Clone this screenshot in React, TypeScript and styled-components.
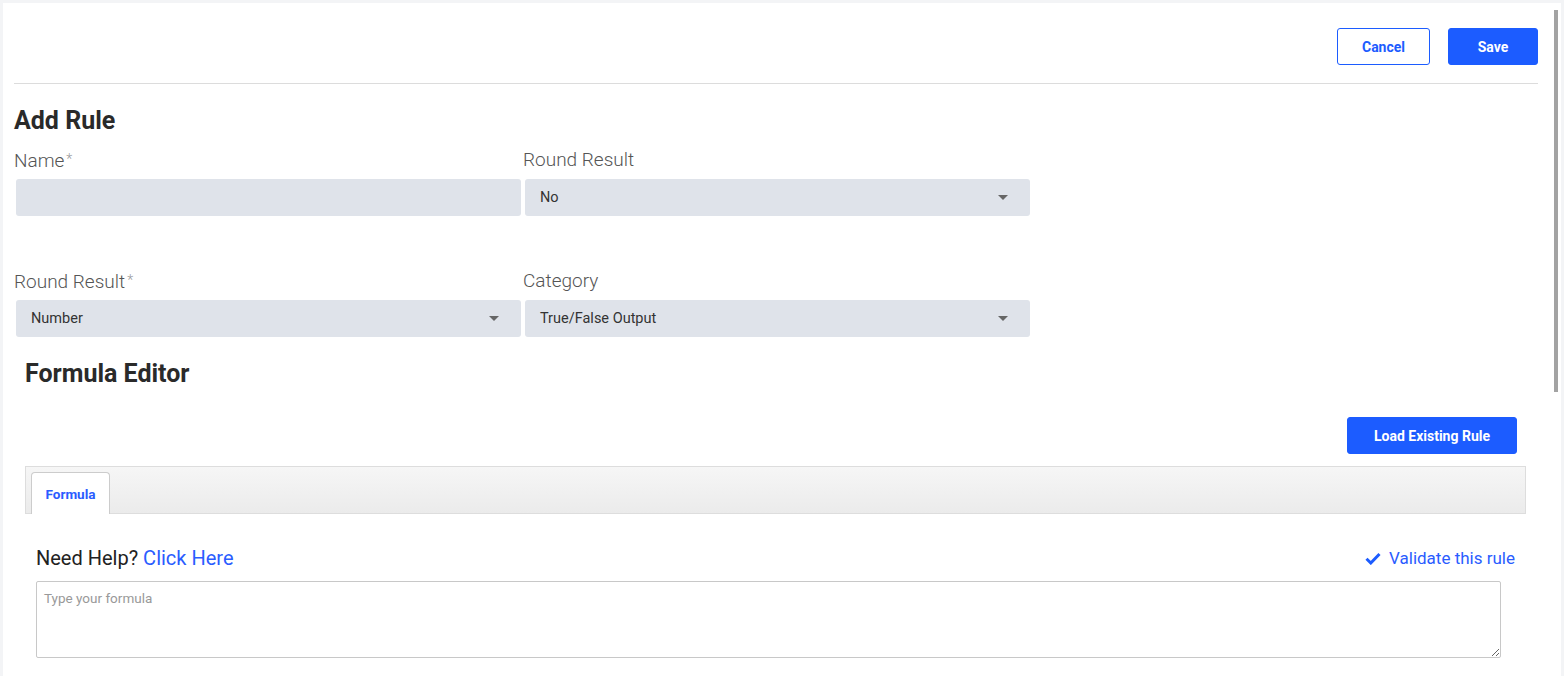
import React from "react";
import styled, { createGlobalStyle } from "styled-components";

const GlobalStyle = createGlobalStyle`
  html, body {
    margin: 0;
    padding: 0;
    background: #f3f4f6;
    font-family: Roboto, "Liberation Sans", Arial, sans-serif;
    overflow: hidden;
  }
  * { box-sizing: border-box; }
`;

const Frame = styled.div`
  padding: 3px 3px 0 3px;
  height: 676px;
`;

const Panel = styled.div`
  background: #ffffff;
  height: 673px;
  display: flex;
  overflow: hidden;
`;

const Content = styled.div`
  flex: 1;
  min-width: 0;
  padding: 0 15px 0 11px;
`;

const ScrollRail = styled.div`
  width: 8px;
  flex: none;
  padding: 7px 3px 0 1px;
`;

const ScrollThumb = styled.div`
  width: 4px;
  height: 382px;
  background: #a3a3a3;
`;

const Header = styled.div`
  display: flex;
  justify-content: flex-end;
  gap: 18px;
  padding: 25px 0 18px;
  border-bottom: 1px solid #dcdcdc;
`;

const Button = styled.button<{ $outline?: boolean; $wide?: boolean }>`
  height: 37px;
  min-width: ${(p) => (p.$wide ? "170px" : p.$outline ? "93px" : "90px")};
  border-radius: 3px;
  font-family: Roboto, "Liberation Sans", Arial, sans-serif;
  font-weight: 700;
  font-size: 14px;
  cursor: pointer;
  border: 1px solid #1c5cff;
  background: ${(p) => (p.$outline ? "#ffffff" : "#1c5cff")};
  color: ${(p) => (p.$outline ? "#1c5cff" : "#ffffff")};
`;

const Title = styled.h2`
  margin: 0;
  font-size: 25px;
  font-weight: 700;
  color: #2a2a2a;
  line-height: 28px;
`;

const FormTitle = styled(Title)`
  padding-top: 23px;
`;

const FieldGrid = styled.div`
  display: grid;
  grid-template-columns: 509px 509px;
  row-gap: 54px;
  margin-top: 14px;
`;

const Field = styled.div`
  display: flex;
  flex-direction: column;
`;

const Label = styled.label`
  font-size: 19px;
  font-weight: 300;
  color: #555;
  line-height: 21px;
  height: 21px;
  margin-bottom: 9px;
`;

const Star = styled.span`
  font-size: 14px;
  color: #999;
  margin-left: 2px;
  vertical-align: 3px;
`;

const Box = styled.div`
  margin: 0 2px;
  height: 37px;
  background: #dfe3ea;
  border-radius: 3px;
  display: flex;
  align-items: center;
  justify-content: space-between;
  padding: 0 22px 0 15px;
  font-size: 14.5px;
  color: #333;
`;

const Caret = styled.span`
  width: 0;
  height: 0;
  border-left: 5px solid transparent;
  border-right: 5px solid transparent;
  border-top: 5px solid #666;
`;

const EditorSection = styled.div`
  padding: 0 12px 0 11px;
`;

const EditorTitle = styled(Title)`
  margin-top: 23px;
`;

const ActionRow = styled.div`
  display: flex;
  justify-content: flex-end;
  padding: 29px 9px 12px 0;
`;

const TabBar = styled.div`
  height: 48px;
  border: 1px solid #dddddd;
  background: linear-gradient(#f6f6f6, #ebebeb);
  display: flex;
  align-items: flex-end;
  padding-left: 5px;
`;

const Tab = styled.div<{ $active?: boolean }>`
  width: 79px;
  height: 42px;
  background: #ffffff;
  border: 1px solid #cccccc;
  border-bottom: none;
  border-radius: 4px 4px 0 0;
  display: flex;
  align-items: center;
  justify-content: center;
  font-size: 13.5px;
  font-weight: 700;
  color: ${(p) => (p.$active ? "#2a5cff" : "#555")};
  margin-bottom: -1px;
`;

const TabBody = styled.div`
  padding: 32px 11px 0 11px;
`;

const HelpRow = styled.div`
  display: flex;
  justify-content: space-between;
  align-items: center;
  height: 24px;
  margin-bottom: 11px;
`;

const HelpText = styled.span`
  font-size: 20px;
  color: #222;
`;

const Link = styled.a`
  color: #2a5cff;
  text-decoration: none;
  cursor: pointer;
`;

const Validate = styled.a`
  display: flex;
  align-items: center;
  gap: 8px;
  font-size: 17px;
  color: #2a5cff;
  cursor: pointer;
`;

const FormulaInput = styled.textarea`
  display: block;
  width: calc(100% - 14px);
  height: 77px;
  border: 1px solid #c8c8c8;
  border-radius: 2px;
  padding: 8px 7px;
  font-family: Roboto, "Liberation Sans", Arial, sans-serif;
  font-size: 13.5px;
  color: #333;
  resize: vertical;
  outline: none;
  &::placeholder {
    color: #999;
  }
`;

const Check = () => (
  <svg width="16" height="13" viewBox="0 0 16 13">
    <path d="M1.5 6.8 L5.8 11 L14.5 2" fill="none" stroke="#1c5cff" strokeWidth="3" />
  </svg>
);

export default function App() {
  return (
    <>
      <GlobalStyle />
      <Frame>
        <Panel>
          <Content>
            <Header>
              <Button $outline>Cancel</Button>
              <Button>Save</Button>
            </Header>
            <FormTitle>Add Rule</FormTitle>
            <FieldGrid>
              <Field>
                <Label>
                  Name<Star>*</Star>
                </Label>
                <Box />
              </Field>
              <Field>
                <Label>Round Result</Label>
                <Box>
                  No
                  <Caret />
                </Box>
              </Field>
              <Field>
                <Label>
                  Round Result<Star>*</Star>
                </Label>
                <Box>
                  Number
                  <Caret />
                </Box>
              </Field>
              <Field>
                <Label>Category</Label>
                <Box>
                  True/False Output
                  <Caret />
                </Box>
              </Field>
            </FieldGrid>
            <EditorSection>
              <EditorTitle>Formula Editor</EditorTitle>
              <ActionRow>
                <Button $wide>Load Existing Rule</Button>
              </ActionRow>
              <TabBar>
                <Tab $active>Formula</Tab>
              </TabBar>
              <TabBody>
                <HelpRow>
                  <HelpText>
                    Need Help? <Link>Click Here</Link>
                  </HelpText>
                  <Validate>
                    <Check />
                    Validate this rule
                  </Validate>
                </HelpRow>
                <FormulaInput placeholder="Type your formula" />
              </TabBody>
            </EditorSection>
          </Content>
          <ScrollRail>
            <ScrollThumb />
          </ScrollRail>
        </Panel>
      </Frame>
    </>
  );
}
